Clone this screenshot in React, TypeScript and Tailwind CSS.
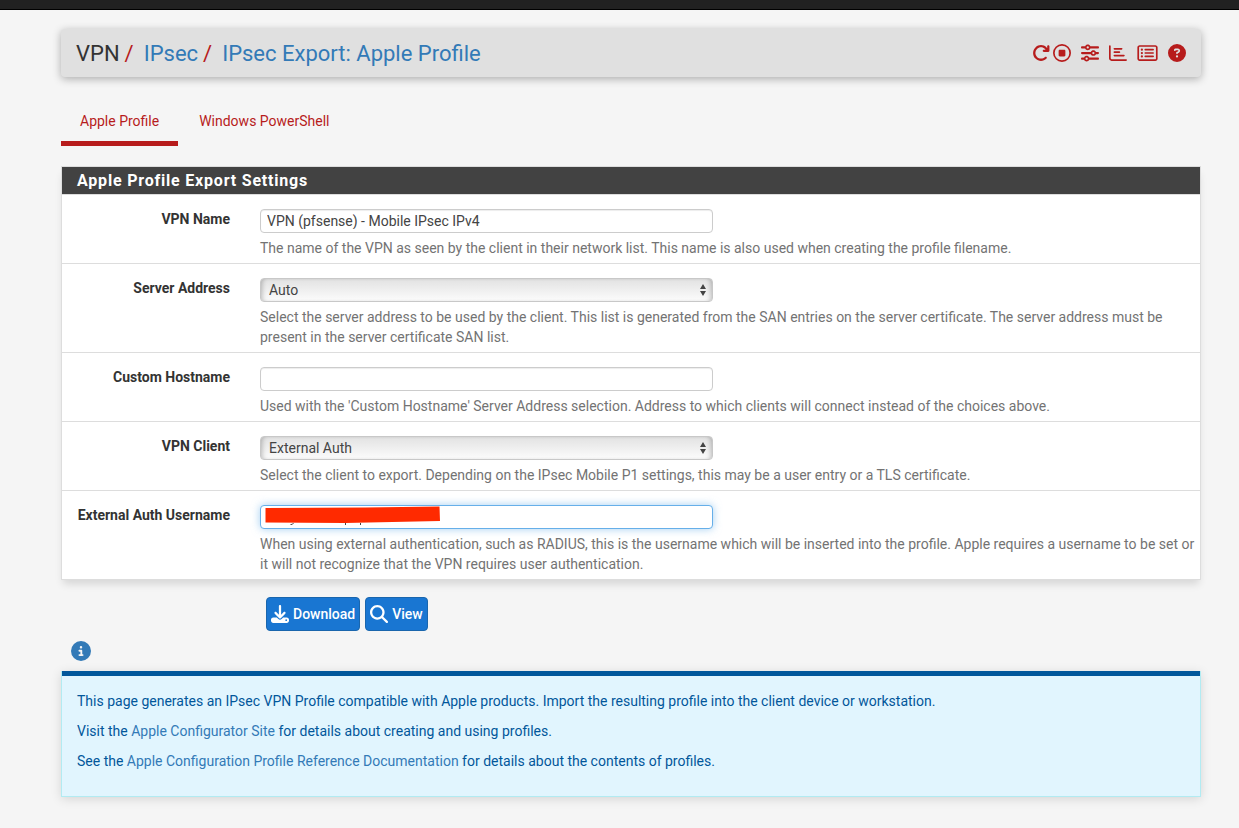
import type { ReactNode } from "react";
import {
  FaArrowRotateRight,
  FaCircleInfo,
  FaCircleQuestion,
  FaDownload,
  FaMagnifyingGlass,
  FaRegChartBar,
  FaRegCircleStop,
  FaRegRectangleList,
  FaSliders,
} from "react-icons/fa6";

const actions = [
  { label: "Restart service", icon: <FaArrowRotateRight className="size-[18px]" />, gap: "" },
  { label: "Stop service", icon: <FaRegCircleStop className="size-[18px]" />, gap: "ml-[3px]" },
  { label: "Settings", icon: <FaSliders className="size-[18px]" />, gap: "ml-2.5" },
  { label: "Status", icon: <FaRegChartBar className="size-[18px]" />, gap: "ml-2.5" },
  { label: "Logs", icon: <FaRegRectangleList className="h-[18px] w-[21px]" />, gap: "ml-2.5" },
  { label: "Help", icon: <FaCircleQuestion className="size-[18px]" />, gap: "ml-2.5" },
];

const inputClass =
  "block h-6 w-full rounded border border-[#ccc] bg-white px-1.5 text-sm text-[#444] shadow-[inset_0_1px_1px_rgba(0,0,0,0.075)] outline-none";

function Row({ id, label, help, children }: { id: string; label: string; help: string; children: ReactNode }) {
  return (
    <div className="flex border-b border-[#ddd] pt-3.5 pb-[5px] last:border-b-0">
      <label htmlFor={id} className="w-[168px] shrink-0 text-right text-sm leading-5 font-bold text-[#333]">
        {label}
      </label>
      <div className="ml-[30px] min-w-0 flex-1">
        <div className="relative w-[48.2%]">{children}</div>
        <p className="mt-[5px] text-sm leading-5 text-[#737373]">{help}</p>
      </div>
    </div>
  );
}

function Select({ id, options }: { id: string; options: string[] }) {
  return (
    <>
      <select
        id={id}
        className="block h-6 w-full appearance-none rounded border border-[#c8c8c8] bg-linear-to-b from-[#e2e2e2] to-[#fcfcfc] px-2 text-sm leading-5 text-[#444] shadow-[inset_4px_0_5px_-3px_rgba(0,0,0,0.25),inset_-4px_0_5px_-3px_rgba(0,0,0,0.25)] outline-none"
      >
        {options.map((option) => (
          <option key={option}>{option}</option>
        ))}
      </select>
      <svg viewBox="0 0 6 12" className="pointer-events-none absolute top-1.5 right-[7px] h-3 w-1.5 fill-[#444]">
        <path d="M0 5 3 0l3 5zM0 7h6l-3 5z" />
      </svg>
    </>
  );
}

export default function App() {
  return (
    <div className="min-h-screen bg-[#f5f5f5] font-[Roboto,sans-serif] text-sm leading-5 text-[#333]">
      <div className="h-2.5 border-b border-black bg-[#212121]" />
      <div className="mr-[38px] ml-[61px] pt-[19px] pb-8">
        <header className="flex h-12 items-center justify-between rounded bg-[#e0e0e0] px-[15px] shadow-[0_2px_8px_rgba(0,0,0,0.3)]">
          <ol className="flex pt-0.5 text-[22px] leading-6">
            <li>VPN</li>
            <li>
              <span className="mr-2.5 ml-[5px] text-[#b71c1c]">/</span>
              <a href="#ipsec" className="text-[#337ab7]">IPsec</a>
            </li>
            <li>
              <span className="mr-2.5 ml-[5px] text-[#b71c1c]">/</span>
              <a href="#export" className="text-[#337ab7]">IPsec Export: Apple Profile</a>
            </li>
          </ol>
          <div className="flex items-center text-[#b71c1c]">
            {actions.map((action) => (
              <a key={action.label} href="#action" aria-label={action.label} className={action.gap}>
                {action.icon}
              </a>
            ))}
          </div>
        </header>

        <nav className="mt-[19px] flex text-[#b71c1c]">
          <a href="#apple" className="border-b-5 border-[#b71c1c] px-[19px] pt-[15px] pb-2.5">Apple Profile</a>
          <a href="#windows" className="ml-0.5 border-b-5 border-transparent px-[19px] pt-[15px] pb-2.5">
            Windows PowerShell
          </a>
        </nav>

        <section className="mt-5 border border-[#ddd] bg-white shadow-[0_6px_8px_-2px_rgba(0,0,0,0.13)]">
          <h2 className="border-b border-[#ddd] bg-[#424242] px-[15px] pt-1 pb-[3px] text-base leading-5 font-bold tracking-wider text-white">
            Apple Profile Export Settings
          </h2>
          <form>
            <Row
              id="name"
              label="VPN Name"
              help="The name of the VPN as seen by the client in their network list. This name is also used when creating the profile filename."
            >
              <input id="name" type="text" defaultValue="VPN (pfsense) - Mobile IPsec IPv4" className={inputClass} />
            </Row>
            <Row
              id="server"
              label="Server Address"
              help="Select the server address to be used by the client. This list is generated from the SAN entries on the server certificate. The server address must be present in the server certificate SAN list."
            >
              <Select id="server" options={["Auto"]} />
            </Row>
            <Row
              id="hostname"
              label="Custom Hostname"
              help="Used with the 'Custom Hostname' Server Address selection. Address to which clients will connect instead of the choices above."
            >
              <input id="hostname" type="text" className={inputClass} />
            </Row>
            <Row
              id="client"
              label="VPN Client"
              help="Select the client to export. Depending on the IPsec Mobile P1 settings, this may be a user entry or a TLS certificate."
            >
              <Select id="client" options={["External Auth"]} />
            </Row>
            <Row
              id="username"
              label="External Auth Username"
              help="When using external authentication, such as RADIUS, this is the username which will be inserted into the profile. Apple requires a username to be set or it will not recognize that the VPN requires user authentication."
            >
              <input
                id="username"
                type="text"
                className="block h-6 w-full rounded border border-[#66afe9] bg-white px-1.5 text-sm shadow-[0_0_8px_rgba(102,175,233,0.6)] outline-none"
              />
              <svg viewBox="0 0 176 20" className="pointer-events-none absolute top-px left-[5px] h-5 w-44">
                <path d="M25.500 18.500q2 .5 3-1.500M80.500 17v2M95.500 17v2" fill="none" stroke="#444" />
                <path d="M.5 2 100 1.500 174.500.5l.5 14.500L80 17 .5 16.500z" fill="#ff2a00" />
              </svg>
            </Row>
          </form>
        </section>

        <div className="mt-[17px] ml-[205px] flex gap-[5px] font-medium text-white">
          <button className="flex h-[34px] items-center gap-1 rounded border border-[#1a66ad] bg-[#1976d2] px-1">
            <FaDownload className="size-[18px]" />
            Download
          </button>
          <button className="flex h-[34px] items-center gap-1 rounded border border-[#1a66ad] bg-[#1976d2] px-1">
            <FaMagnifyingGlass className="size-[18px]" />
            View
          </button>
        </div>

        <button aria-label="Hide information" className="mt-2.5 ml-2.5 block text-[#337ab7]">
          <FaCircleInfo className="size-5" />
        </button>

        <section className="mt-2.5 border border-[#b2ebf2] border-t-0 bg-[#e1f5fe] text-[#01579b] shadow-[0_2px_10px_rgba(0,0,0,0.13)]">
          <div className="h-[5px] bg-[#01579b]" />
          <div className="space-y-2.5 px-[15px] pt-[15px] pb-[25px]">
            <p>
              This page generates an IPsec VPN Profile compatible with Apple products. Import the resulting profile into
              the client device or workstation.
            </p>
            <p>
              Visit the <a href="#configurator" className="text-[#337ab7]">Apple Configurator Site</a> for details about
              creating and using profiles.
            </p>
            <p>
              See the{" "}
              <a href="#reference" className="text-[#337ab7]">Apple Configuration Profile Reference Documentation</a> for
              details about the contents of profiles.
            </p>
          </div>
        </section>
      </div>
    </div>
  );
}
